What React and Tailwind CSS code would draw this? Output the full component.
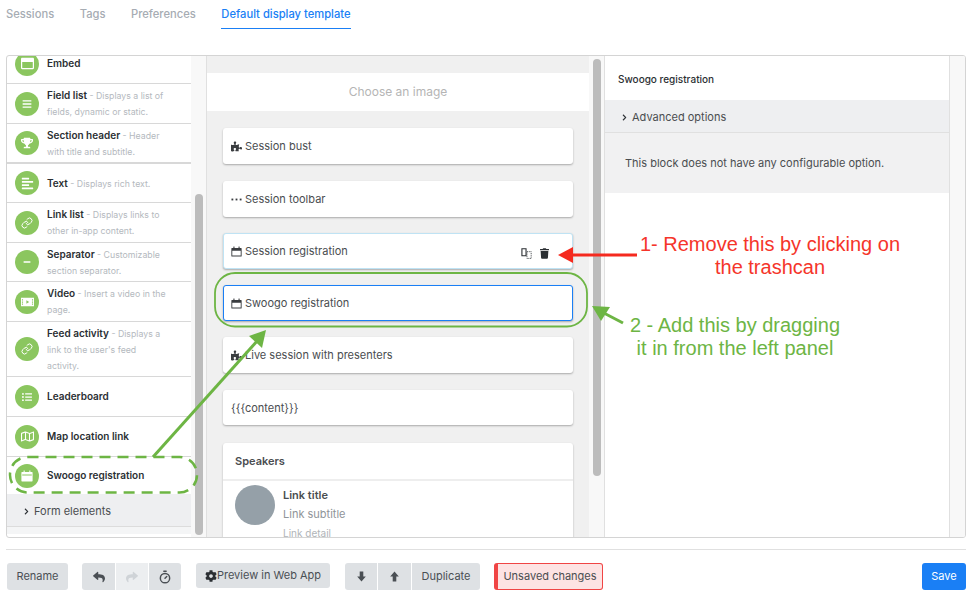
import { FaPuzzlePiece, FaTrash, FaReply, FaShare, FaCog, FaBars, FaTrophy, FaAlignLeft, FaMinus, FaListUl, FaRegMap, FaRegWindowMaximize, FaChevronRight } from 'react-icons/fa'
import { Timer, Link } from 'lucide-react'

function CalendarIcon({ className }) {
  return (
    <svg viewBox="0 0 12 12" className={className} fill="currentColor">
      <path d="M1 2.2h10a.6.6 0 0 1 .6.6v8a.6.6 0 0 1-.6.6H1a.6.6 0 0 1-.6-.6v-8a.6.6 0 0 1 .6-.6zm.4 3v5.2h9.2V5.2z" />
      <rect x="2.6" y="0.6" width="1.2" height="2.2" />
      <rect x="8.2" y="0.6" width="1.2" height="2.2" />
    </svg>
  )
}

function SolidCalendar({ className }) {
  return (
    <svg viewBox="0 0 12 12" className={className} fill="currentColor">
      <path d="M1 2h10a.6.6 0 0 1 .6.6v8.2a.6.6 0 0 1-.6.6H1a.6.6 0 0 1-.6-.6V2.6A.6.6 0 0 1 1 2zm.2 2.4v1h9.6v-1z" fillRule="evenodd" />
      <rect x="2.6" y="0.5" width="1.1" height="2" />
      <rect x="8.3" y="0.5" width="1.1" height="2" />
    </svg>
  )
}

function FilmIcon({ className }) {
  return (
    <svg viewBox="0 0 14 12" className={className} fill="currentColor">
      <path fillRule="evenodd" d="M0 1.5h14v9H0zM1 3v1.3h1.2V3zm0 2.4v1.3h1.2V5.4zm0 2.3V9h1.2V7.7zM11.8 3v1.3H13V3zm0 2.4v1.3H13V5.4zm0 2.3V9H13V7.7zM5.8 4v4l3-2z" />
    </svg>
  )
}

function DotsIcon({ className }) {
  return (
    <svg viewBox="0 0 12 12" className={className} fill="currentColor">
      <rect x="0.5" y="5" width="2" height="2" />
      <rect x="5" y="5" width="2" height="2" />
      <rect x="9.5" y="5" width="2" height="2" />
    </svg>
  )
}

function CopyIcon({ className }) {
  return (
    <svg viewBox="0 0 12 12" className={className} fill="none" stroke="currentColor">
      <path d="M1 .8h4.5v7.6H1z" strokeWidth="1.2" />
      <path d="M6.5 4h4.6v7.4H6.5z" strokeWidth="1" strokeDasharray="1 1" />
    </svg>
  )
}

function ArrowDown({ className }) {
  return (
    <svg viewBox="0 0 10 12" className={className} fill="currentColor">
      <path d="M3 .5h4v5.5h2.8L5 11.5.2 6H3z" />
    </svg>
  )
}

function ArrowUp({ className }) {
  return (
    <svg viewBox="0 0 10 12" className={className} fill="currentColor">
      <path d="M3 11.5h4V6h2.8L5 .5.2 6H3z" />
    </svg>
  )
}

const blocks = [
  { name: 'Embed', icon: FaRegWindowMaximize, iconClass: 'w-[13px] h-[13px]', h: 'h-[40px]', border: 'border-b' },
  { name: 'Field list', desc: 'Displays a list of fields, dynamic or static.', icon: FaBars, iconClass: 'w-[10px] h-[10px]', h: 'h-[40px]', border: 'border-b' },
  { name: 'Section header', desc: 'Header with title and subtitle.', icon: FaTrophy, iconClass: 'w-3 h-3', h: 'h-[40px]', border: 'border-b-2' },
  { name: 'Text', desc: 'Displays rich text.', icon: FaAlignLeft, iconClass: 'w-[13px] h-[13px]', h: 'h-[39px]', border: 'border-b' },
  { name: 'Link list', desc: 'Displays links to other in-app content.', icon: Link, iconClass: 'w-3 h-3', h: 'h-[40px]', border: 'border-b' },
  { name: 'Separator', desc: 'Customizable section separator.', icon: FaMinus, iconClass: 'w-2 h-2', h: 'h-[39px]', border: 'border-b' },
  { name: 'Video', desc: 'Insert a video in the page.', icon: FilmIcon, iconClass: 'w-[13px] h-[12px]', h: 'h-[40px]', border: 'border-b' },
  { name: 'Feed activity', desc: "Displays a link to the user's feed activity.", icon: Link, iconClass: 'w-3 h-3', h: 'h-[55px]', border: 'border-b' },
  { name: 'Leaderboard', icon: FaListUl, iconClass: 'w-[10px] h-[10px]', h: 'h-[40px]', border: 'border-b' },
  { name: 'Map location link', icon: FaRegMap, iconClass: 'w-[13px] h-[13px]', h: 'h-[40px]', border: 'border-b' },
  { name: 'Swoogo registration', icon: SolidCalendar, iconClass: 'w-3 h-3', h: 'h-[37px]', border: '' },
]

function BlockRow({ block }) {
  const Icon = block.icon
  return (
    <div className={`flex items-center pl-2 pr-[25px] border-[#d8d8d8] ${block.h} ${block.border}`}>
      <div className="w-6 h-6 rounded-full bg-[#8bc65f] flex items-center justify-center flex-shrink-0 text-white">
        <Icon className={block.iconClass} />
      </div>
      <p className="ml-2 text-[8.75px] leading-[16px] text-[#b4b9be]">
        <span className="text-[10px] font-semibold text-[#2b2f33]">{block.name}</span>
        {block.desc && <span> - {block.desc}</span>}
      </p>
    </div>
  )
}

function Card({ icon: Icon, label, pl = 'pl-2', mb = 'mb-[17px]', h = 'h-[36px]', children, className = '' }) {
  return (
    <div className={`flex items-center justify-between bg-white rounded-[3px] shadow-[0_1px_2px_rgba(0,0,0,0.3)] pr-[24px] text-[11px] text-[#4a4d50] ${pl} ${h} ${mb} ${className}`}>
      <span className="flex items-center gap-[3px]">
        {Icon && <Icon className="w-[11px] h-[11px] text-[#3a3d40]" />}
        {label}
      </span>
      {children}
    </div>
  )
}

function GrayButton({ className = '', children }) {
  return (
    <div className={`flex items-center justify-center text-[11px] text-[#4a4f54] ${className}`}>{children}</div>
  )
}

export default function App() {
  return (
    <div className="relative w-[977px] h-[598px] overflow-hidden bg-white font-['Inter',sans-serif]">
      {/* Tabs */}
      <div className="flex gap-[25.5px] pl-[6px] h-[29px] text-[11.2px] font-medium text-[#a6acb3]">
        <span className="pt-[6px]">Sessions</span>
        <span className="pt-[6px]">Tags</span>
        <span className="pt-[6px]">Preferences</span>
        <span className="pt-[6px] border-b border-[#1a7ff5] text-[#1a7ff5]">Default display template</span>
      </div>

      {/* Editor */}
      <div className="flex mt-[26px] ml-[6px] w-[960px] h-[483px] border border-[#d4d4d4] rounded-[3px] overflow-hidden">
        <div className="w-[184px] flex-shrink-0 overflow-hidden">
          <div className="-mt-[12px]">
            {blocks.map(b => <BlockRow key={b.name} block={b} />)}
          </div>
          <div className="flex items-center h-[33px] pl-[16px] pt-[2px] gap-[4px] bg-[#eeeff1] border-b border-[#dcdcdc] text-[11px] text-[#4a4d50]">
            <FaChevronRight className="w-[7px] h-[7px] text-[#2b2f33]" />
            Form elements
          </div>
          <div className="h-[7px] bg-[#f4f5f6]" />
        </div>

        <div className="w-[16px] flex-shrink-0 bg-[#f8f8f8] border-r border-[#e0e0e0] px-[4px]">
          <div className="w-2 h-[341px] mt-[138px] rounded bg-[#bcbcbc]" />
        </div>

        <div className="w-[382px] flex-shrink-0 bg-[#f0f0f0] overflow-hidden pt-[17px]">
          <div className="h-[38px] flex items-center justify-center bg-white text-[12px] text-[#b5b5b5] mb-[17px]">Choose an image</div>
          <div className="px-[16px]">
            <Card icon={FaPuzzlePiece} label="Session bust" />
            <Card icon={DotsIcon} label="Session toolbar" mb="mb-[16px]" />
            <Card icon={CalendarIcon} label="Session registration" pl="pl-[7px]" className="border border-[#bfe3f4]" mb="mb-[16px]">
              <span className="flex items-center gap-[8px] mt-[5px] -mr-px text-[#2b2f33]">
                <CopyIcon className="w-[11px] h-[11px]" />
                <FaTrash className="w-[9px] h-[11px]" />
              </span>
            </Card>
            <Card icon={CalendarIcon} label="Swoogo registration" pl="pl-[7px]" mb="mb-[16px]" className="border border-[#1a7ff5] shadow-[0_0_0_1px_rgba(26,127,245,0.4)]" />
            <Card icon={FaPuzzlePiece} label="Live session with presenters" />
            <Card label="{{{content}}}" h="h-[35px]" mb="mb-[18px]" className="pt-px" />
            <div className="bg-white rounded-[3px] shadow-[0_1px_2px_rgba(0,0,0,0.3)]">
              <div className="h-[38px] flex items-center px-3 text-[11px] font-semibold text-[#4a4d50] border-b-2 border-[#eeeeee]">Speakers</div>
              <div className="flex px-3 pt-[4px] h-[80px]">
                <div className="w-10 h-10 rounded-full bg-[#95a0a8] flex-shrink-0" />
                <div className="ml-2 pt-px text-[11px] leading-[19px] text-[#8f9499]">
                  <p className="font-semibold text-[#4a4d50]">Link title</p>
                  <p>Link subtitle</p>
                  <p className="text-[10px] text-[#b0b4b8]">Link detail</p>
                </div>
              </div>
            </div>
          </div>
        </div>

        <div className="w-[16px] flex-shrink-0 bg-[#f8f8f8] border-r border-[#e0e0e0] pl-[4px] pt-[3px]">
          <div className="w-2 h-[417px] rounded bg-[#bcbcbc]" />
        </div>

        <div className="w-[345px] flex-shrink-0 border-r border-[#e0e0e0]">
          <div className="h-[44px] flex items-center pl-[13px] text-[10px] font-medium text-[#2b2f33] pt-[3px]">Swoogo registration</div>
          <div className="h-[33px] flex items-center pl-[16px] pt-[2px] gap-[4px] bg-[#eeeff1] border-b border-[#e0e0e0] text-[11px] text-[#4a4d50]">
            <FaChevronRight className="w-[7px] h-[7px] text-[#2b2f33]" />
            Advanced options
          </div>
          <div className="h-[60px] flex items-center pl-[20px] bg-[#f1f1f2] text-[11px] text-[#4a4d50]">This block does not have any configurable option.</div>
        </div>
        <div className="flex-1 bg-[#f8f8f8]" />
      </div>

      {/* Toolbar */}
      <div className="ml-[6px] w-[960px] mt-[11px] border-t border-[#e0e0e0] pt-[13px] flex items-start">
        <GrayButton className="bg-[#dee1e4] ml-[1px] w-[61px] h-[27px] rounded-[3px]">Rename</GrayButton>
        <div className="flex gap-px ml-[14px]">
          <GrayButton className="bg-[#dee1e4] w-[33px] h-[27px] rounded-l-[3px] text-[#2b2f33]"><FaReply className="w-3 h-3" /></GrayButton>
          <GrayButton className="bg-[#eceef0] w-[32px] h-[27px] text-[#cfd3d7]"><FaShare className="w-3 h-3" /></GrayButton>
          <GrayButton className="bg-[#dee1e4] w-[32px] h-[27px] rounded-r-[3px] text-[#2b2f33]"><Timer className="w-[14px] h-[14px]" strokeWidth={2.5} /></GrayButton>
        </div>
        <GrayButton className="bg-[#dee1e4] ml-[15px] w-[134px] h-[25px] rounded-[3px]">
          <FaCog className="w-3 h-3 text-[#2b2f33]" />Preview in Web App
        </GrayButton>
        <div className="flex gap-px ml-[15px]">
          <GrayButton className="bg-[#dee1e4] w-[32px] h-[27px] rounded-l-[3px] text-[#2b2f33]"><ArrowDown className="w-[9px] h-[11px]" /></GrayButton>
          <GrayButton className="bg-[#dee1e4] w-[33px] h-[27px] text-[#2b2f33]"><ArrowUp className="w-[9px] h-[11px]" /></GrayButton>
          <GrayButton className="bg-[#dee1e4] w-[68px] h-[27px] rounded-r-[3px]">Duplicate</GrayButton>
        </div>
        <div className="ml-[14px] w-[109px] h-[27px] flex items-center justify-center rounded-[3px] border border-[#f04545] border-l-4 bg-[#fde3e3] text-[11px] text-[#4a4d50]">Unsaved changes</div>
        <div className="ml-auto w-[44px] h-[27px] flex items-center justify-center rounded-[3px] bg-[#1a7ff5] text-[11px] text-white">Save</div>
      </div>

      {/* Annotations drawn over the screenshot */}
      <svg className="absolute inset-0 pointer-events-none" width="977" height="598" fill="none">
        <rect x="215" y="273" width="372" height="53.5" rx="20" stroke="#6db544" strokeWidth="1.8" />
        <rect x="10" y="457" width="187" height="35.5" rx="17.5" stroke="#6db544" strokeWidth="2.5" strokeDasharray="11 7" />
        <path d="M153 457L258 340" stroke="#6db544" strokeWidth="3" />
        <path d="M266 330L249 336L262 348Z" fill="#6db544" />
        <path d="M623 323L600 311" stroke="#6db544" strokeWidth="3" />
        <path d="M592 306L610 307L601 321Z" fill="#6db544" />
        <path d="M637 255L570 255" stroke="#f52a1f" strokeWidth="3" />
        <path d="M558 255L573 247L573 263Z" fill="#f52a1f" />
      </svg>
      <div className="absolute left-[620px] top-[233px] w-[300px] text-center text-[20px] leading-[23px] text-[#f5352a] font-['Liberation_Sans',sans-serif]">
        1- Remove this by clicking on<br />the trashcan
      </div>
      <div className="absolute left-[620px] top-[314px] w-[230px] text-center text-[20px] leading-[23px] text-[#6db544] font-['Liberation_Sans',sans-serif]">
        2 - Add this by dragging<br />it in from the left panel
      </div>
    </div>
  )
}
